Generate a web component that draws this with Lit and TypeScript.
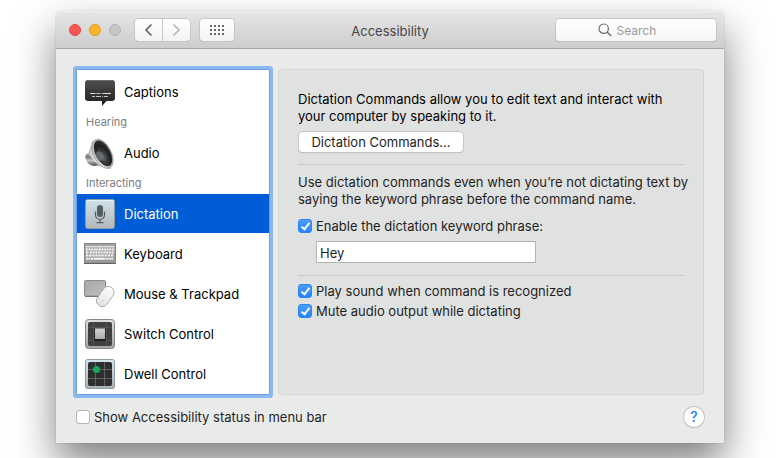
import { LitElement, html, css, svg } from "lit";
import { customElement, property, state } from "lit/decorators.js";
import { classMap } from "lit/directives/class-map.js";

const icons: Record<string, unknown> = {
  captions: svg`
    <defs><linearGradient id="cap" x1="0" y1="0" x2="0" y2="1"><stop offset="0" stop-color="#505050"/><stop offset="1" stop-color="#1c1c1c"/></linearGradient></defs>
    <path d="M4 4h24a3 3 0 0 1 3 3v15a3 3 0 0 1-3 3h-5.500L18 30v-5H4a3 3 0 0 1-3-3V7a3 3 0 0 1 3-3z" fill="url(#cap)"/>
    <path d="M4 4.500h24" stroke="#6a6a6a" stroke-width="1"/>
    <path d="M6 17.500h5.500m1 0h3m1 0h1m1 0h8.500" stroke="#dcdcdc" stroke-width="1"/>
    <path d="M8 20.500h3m1 0h5m1 0h1m1 0h4" stroke="#c4c4c4" stroke-width="1"/>`,
  audio: svg`
    <defs>
      <linearGradient id="rim" x1="0" y1="0" x2="1" y2="1"><stop offset="0" stop-color="#a8a8a8"/><stop offset=".5" stop-color="#e4e4e6"/><stop offset="1" stop-color="#85858c"/></linearGradient>
      <linearGradient id="mag" x1="0" y1="0" x2="0" y2="1"><stop offset="0" stop-color="#dadade"/><stop offset=".45" stop-color="#76767c"/><stop offset=".65" stop-color="#c8c8cc"/><stop offset="1" stop-color="#4c4c50"/></linearGradient>
      <radialGradient id="cone" cx=".38" cy=".62" r=".75"><stop offset="0" stop-color="#6c7073"/><stop offset=".3" stop-color="#3a3c3e"/><stop offset=".6" stop-color="#1e1f20"/><stop offset="1" stop-color="#3c3e40"/></radialGradient>
    </defs>
    <path d="M2 17.500C4 15.500 7 15 9 13l8 15c-4 .5-6 1.500-9 .500C3 27 0 21 2 17.500z" fill="url(#mag)"/>
    <path d="M8.500 4C6.500 10 5.500 13 4 16.500L15 29c4 1 9 3 12 2.500z" fill="url(#rim)"/>
    <ellipse cx="18.500" cy="16.700" rx="8.800" ry="15.900" transform="rotate(-27 18.500 16.700)" fill="url(#rim)" stroke="#8e8e92" stroke-width=".6"/>
    <ellipse cx="19" cy="16.300" rx="7.400" ry="14" transform="rotate(-27 19 16.300)" fill="url(#cone)"/>
    <ellipse cx="15.500" cy="19" rx="3.500" ry="5" transform="rotate(-27 15.500 19)" fill="#74787b" opacity=".75"/>`,
  dictation: svg`
    <defs><linearGradient id="dic" x1="0" y1="0" x2="0" y2="1"><stop offset="0" stop-color="#cfe2e9"/><stop offset="1" stop-color="#b2b8ba"/></linearGradient></defs>
    <rect x="1.500" y="1.500" width="29" height="29" rx="2" fill="url(#dic)" stroke="#8f9ba5"/>
    <path d="M2.500 2.500h27" stroke="#e6f1f5"/>
    <rect x="13" y="7" width="6" height="12" rx="3" fill="#545d61"/>
    <path d="M11.500 13.500v3.500a4.500 4.500 0 0 0 9 0v-3.500M16 21.500v3M12.500 24.600h7" fill="none" stroke="#545d61" stroke-width="1.200"/>`,
  keyboard: svg`
    <defs><linearGradient id="kb" x1="0" y1="0" x2="0" y2="1"><stop offset="0" stop-color="#8f8f8f"/><stop offset=".15" stop-color="#b0b0b0"/><stop offset="1" stop-color="#949494"/></linearGradient></defs>
    <rect x="0" y="5" width="32" height="21" rx="1" fill="url(#kb)"/>
    <path d="M.5 5.500h31M.5 5v21M31.500 5v21" stroke="#858585"/>
    <path d="M.5 25.500h31" stroke="#606060"/>
    <path d="M2 8.700h28" stroke="#f2f2f2" stroke-width="1.300" stroke-dasharray="1.600 .6"/>
    <path d="M2 11.500h28" stroke="#f5f5f5" stroke-width="1.900" stroke-dasharray="1.800 .8"/>
    <path d="M2 14.500h3.300m.7 0h24" stroke="#f5f5f5" stroke-width="1.900" stroke-dasharray="1.900 .8"/>
    <path d="M2 17.500h28" stroke="#f5f5f5" stroke-width="1.900" stroke-dasharray="2.300 .8"/>
    <path d="M2 20.700h1.800m.6 0h1.800m.6 0h2.200m.6 0h12m.6 0h2.200m.6 0h1.700m.6 0h1.800" stroke="#f5f5f5" stroke-width="2"/>`,
  mouse: svg`
    <defs>
      <linearGradient id="pad" x1="0" y1="0" x2="1" y2="1"><stop offset="0" stop-color="#a6a6a6"/><stop offset="1" stop-color="#c0c0c0"/></linearGradient>
      <linearGradient id="mou" x1="0" y1="0" x2="0" y2="1"><stop offset="0" stop-color="#fff"/><stop offset="1" stop-color="#e2e2e2"/></linearGradient>
    </defs>
    <rect x=".5" y="2.500" width="21" height="15.500" rx="1" fill="url(#pad)" stroke="#8b8b8b"/>
    <path d="M1 18.500h20" stroke="#777"/>
    <rect x="15.500" y="7.500" width="11.500" height="22" rx="5.600" transform="rotate(35 21.200 18.500)" fill="url(#mou)" stroke="#a9a9a9" stroke-width=".9"/>
    <circle cx="19" cy="22.500" r="1" fill="#d4d4d4"/>`,
  switch: svg`
    <defs>
      <linearGradient id="swf" x1="0" y1="0" x2="0" y2="1"><stop offset="0" stop-color="#dedede"/><stop offset="1" stop-color="#a4a4a4"/></linearGradient>
      <linearGradient id="swb" x1="0" y1="0" x2="0" y2="1"><stop offset="0" stop-color="#d4d4d4"/><stop offset="1" stop-color="#ababab"/></linearGradient>
    </defs>
    <rect x="1.500" y="1.500" width="29" height="29" rx="3" fill="url(#swf)" stroke="#868686"/>
    <rect x="4" y="4" width="24" height="24" rx="2" fill="#3f4042"/>
    <path d="M9.500 4v24M22.500 4v24M4 9.500h24M4 22.500h24" stroke="#58595b" stroke-width=".8"/>
    <rect x="10" y="11" width="12" height="12" fill="#222"/>
    <rect x="11" y="10.500" width="10" height="10.500" fill="url(#swb)"/>`,
  dwell: svg`
    <defs><linearGradient id="dwf" x1="0" y1="0" x2="0" y2="1"><stop offset="0" stop-color="#d3e7ee"/><stop offset="1" stop-color="#a9b0b4"/></linearGradient></defs>
    <rect x="1.500" y="1.500" width="29" height="29" rx="2" fill="url(#dwf)" stroke="#8d9aa0"/>
    <rect x="4" y="4" width="24" height="24" rx="2" fill="#2d2e2f"/>
    <path d="M11.500 4v24M20.500 4v24M4 11.500h24M4 20.500h24" stroke="#6c6e6f" stroke-width=".8"/>
    <circle cx="12.500" cy="11.500" r="3.600" fill="#17a75c"/>`,
};

type Entry = { heading: string } | { id: string; label: string };

const entries: Entry[] = [
  { id: "captions", label: "Captions" },
  { heading: "Hearing" },
  { id: "audio", label: "Audio" },
  { heading: "Interacting" },
  { id: "dictation", label: "Dictation" },
  { id: "keyboard", label: "Keyboard" },
  { id: "mouse", label: "Mouse & Trackpad" },
  { id: "switch", label: "Switch Control" },
  { id: "dwell", label: "Dwell Control" },
];

@customElement("pref-check")
class PrefCheck extends LitElement {
  @property() label = "";
  @property({ type: Boolean }) checked = false;

  static styles = css`
    :host { display: block; }
    .row { display: flex; align-items: center; gap: 4px; line-height: 16px; }
    .box {
      appearance: none; box-sizing: border-box; flex: none; margin: 0;
      width: 14px; height: 14px; border: 1px solid #b4b4b4; border-radius: 3px;
      background: #fff; display: grid; place-items: center;
    }
    .box:checked { background: linear-gradient(#4a9dfb, #2484fb); border-color: #2e86f0; }
    .box:checked::after {
      content: ""; width: 3px; height: 7px; margin-bottom: 2px;
      border: solid #fff; border-width: 0 2px 2px 0; transform: rotate(38deg);
    }
  `;

  render() {
    return html`<label class="row">
      <input class="box" type="checkbox" .checked=${this.checked} />
      <span>${this.label}</span>
    </label>`;
  }
}

@customElement("app-root")
class AppRoot extends LitElement {
  @state() private selected = "dictation";

  static styles = css`
    :host {
      display: block; padding: 11px 56px 15px; overflow: hidden; background: #fff;
      font: 13px/17px Inter, "Liberation Sans", sans-serif; color: #1e1e1e;
    }
    button, input { font: inherit; color: inherit; box-sizing: border-box; margin: 0; }
    button { padding: 0; border: 0; background: none; }
    .window {
      background: #e9ebea; border-radius: 5px 5px 0 0;
      box-shadow: 0 0 1px rgba(0, 0, 0, 0.5), 0 20px 40px rgba(0, 0, 0, 0.5);
    }
    .titlebar {
      display: grid; grid-template-columns: 1fr auto 1fr; align-items: center;
      height: 38px; padding: 0 8px; box-sizing: border-box;
      border-bottom: 1px solid #a5a8a6; border-radius: 5px 5px 0 0;
      background: linear-gradient(#e6e6e6, #cdcdcd); box-shadow: inset 0 1px #f2f2f2;
    }
    .tools { display: flex; align-items: center; }
    .lights { display: flex; gap: 8px; margin: 0 14px 0 5px; }
    .light { width: 12px; height: 12px; border-radius: 50%; border: 1px solid #b3b3b3; background: #c6c6c6; }
    .light.close { background: #fc5650; border-color: #e0443e; }
    .light.minimize { background: #fdb42d; border-color: #df9c27; }
    .tool {
      height: 22px; border-radius: 4px; display: grid; place-items: center;
      background: linear-gradient(#fff, #f3f3f3);
      box-shadow: 0 0 0 1px #c6c6c6, 0 1px #a9a9a9;
    }
    .nav { display: flex; gap: 1px; margin-right: 10px; }
    .nav .tool { width: 27px; }
    .nav .back { border-radius: 4px 0 0 4px; }
    .nav .next { border-radius: 0 4px 4px 0; }
    .grid-button { width: 34px; }
    .title { margin: 0; padding-top: 3px; font-size: 13px; font-weight: 400; color: #464646; }
    .search {
      justify-self: end; width: 160px; height: 22px; border-radius: 4px;
      display: flex; align-items: center; justify-content: center; gap: 5px;
      background: linear-gradient(#fff, #f6f6f6); box-shadow: 0 0 0 1px #c6c6c6, 0 1px #a9a9a9;
    }
    .search svg { flex: none; }
    .search input { width: 58px; padding: 2px 0 0; border: 0; background: none; outline: none; font-size: 12px; }
    .search input::placeholder { color: #9a9a9a; }
    .body {
      display: grid; grid-template-columns: 194px minmax(0, 1fr); gap: 8px;
      padding: 20px 20px 0;
    }
    .list {
      margin: 0; padding: 2px 0 0; list-style: none; background: #fff;
      border: 1px solid #6f9fdf; box-shadow: 0 0 0 3px #8cb9f2; border-radius: 1px; color: #000;
    }
    .heading { margin: 0; padding: 0 9px; font-size: 11px; font-weight: 400; line-height: 20px; height: 21px; color: #7c7c7c; }
    .item {
      display: flex; align-items: center; gap: 8px; width: 100%; height: 39px;
      margin-bottom: 1px; padding: 0 7px; text-align: left;
    }
    .item span { padding-top: 2px; }
    .item.selected { background: #005dd8; color: #fff; }
    .icon { width: 32px; height: 32px; flex: none; }
    .pane {
      padding: 21px 19px 20px; background: #e0e2e1; border: 1px solid #d3d5d4; border-radius: 4px;
    }
    .text { margin: 0; white-space: nowrap; }
    .strong { color: #000; }
    .push {
      height: 20px; width: 164px; margin: 7px 1px 12px; background: #fff; border-radius: 4px;
      box-shadow: 0 0 0 1px #c3c5c4, 0 1px 1px #9a9c9b; display: block; line-height: 20px;
    }
    .rule { height: 1px; margin: 0; border: 0; background: #c8cac9; }
    .section { padding: 9px 0 12px; }
    .section .text { margin-bottom: 10px; }
    .phrase { display: block; width: 220px; height: 22px; margin: 7px 0 0 18px; padding: 1px 3px 0; border: 1px solid #b2b4b3; background: #fff; }
    .options { display: grid; gap: 4px; padding-top: 7px; }
    .footer { display: flex; align-items: center; justify-content: space-between; padding: 12px 20px 16px; }
    .help {
      width: 20px; height: 20px; border-radius: 50%; background: #fff; color: #1b7dfb;
      box-shadow: 0 0 0 1px #c6c8c7, 0 1px 1px #9a9c9b; font-size: 14px; font-weight: 500; line-height: 20px; text-align: center;
    }
  `;

  render() {
    return html`<main class="window">
      <header class="titlebar">
        <div class="tools">
          <div class="lights">
            <button class="light close" aria-label="Close"></button>
            <button class="light minimize" aria-label="Minimize"></button>
            <button class="light" aria-label="Zoom" disabled></button>
          </div>
          <div class="nav">
            <button class="tool back" aria-label="Back">
              <svg width="9" height="14" viewBox="0 0 9 14"><path d="M7.500 1.500 2 7l5.500 5.500" fill="none" stroke="#606060" stroke-width="1.600"/></svg>
            </button>
            <button class="tool next" aria-label="Forward" disabled>
              <svg width="9" height="14" viewBox="0 0 9 14"><path d="M1.500 1.500 7 7l-5.500 5.500" fill="none" stroke="#b4b4b4" stroke-width="1.600"/></svg>
            </button>
          </div>
          <button class="tool grid-button" aria-label="Show All">
            <svg width="14" height="10" viewBox="0 0 14 10"><path d="M0 1h14M0 5h14M0 9h14" stroke="#666" stroke-width="2" stroke-dasharray="2 2"/></svg>
          </button>
        </div>
        <h1 class="title">Accessibility</h1>
        <label class="search">
          <svg width="14" height="14" viewBox="0 0 14 14"><circle cx="5.700" cy="5.700" r="4.700" fill="none" stroke="#6b6b6b" stroke-width="1.200"/><path d="m9.100 9.100 4 4" stroke="#6b6b6b" stroke-width="1.400"/></svg>
          <input type="text" placeholder="Search" aria-label="Search" />
        </label>
      </header>
      <div class="body">
        <ul class="list">
          ${entries.map((e) =>
            "heading" in e
              ? html`<li><h2 class="heading">${e.heading}</h2></li>`
              : html`<li>
                  <button
                    class=${classMap({ item: true, selected: e.id === this.selected })}
                    @click=${() => (this.selected = e.id)}
                  >
                    <svg class="icon" viewBox="0 0 32 32" aria-hidden="true">${icons[e.id]}</svg>
                    <span>${e.label}</span>
                  </button>
                </li>`
          )}
        </ul>
        <section class="pane">
          <p class="text strong">Dictation Commands allow you to edit text and interact with<br />your computer by speaking to it.</p>
          <button class="push">Dictation Commands...</button>
          <hr class="rule" />
          <div class="section">
            <p class="text">Use dictation commands even when you’re not dictating text by<br />saying the keyword phrase before the command name.</p>
            <pref-check label="Enable the dictation keyword phrase:" checked></pref-check>
            <input class="phrase" type="text" aria-label="Dictation keyword phrase" .value=${"Hey"} />
          </div>
          <hr class="rule" />
          <div class="options">
            <pref-check label="Play sound when command is recognized" checked></pref-check>
            <pref-check label="Mute audio output while dictating" checked></pref-check>
          </div>
        </section>
      </div>
      <footer class="footer">
        <pref-check label="Show Accessibility status in menu bar"></pref-check>
        <button class="help" aria-label="Help">?</button>
      </footer>
    </main>`;
  }
}
